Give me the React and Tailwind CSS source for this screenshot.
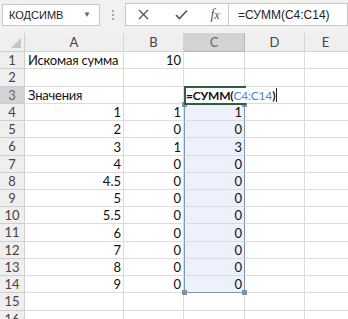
import React from "react";

const rowH = [17, 18, 17, 17, 17, 18, 17, 17, 17, 17, 18, 17, 17, 17, 18, 17];
const colA = ["Искомая сумма", "", "Значения", "1", "2", "3", "4", "4.5", "5", "5.5", "6", "7", "8", "9", "", ""];
const colB = ["10", "", "", "1", "0", "1", "0", "0", "0", "0", "0", "0", "0", "0", "", ""];
const colC = ["", "", "", "1", "0", "3", "0", "0", "0", "0", "0", "0", "0", "0", "", ""];

function Handle({ className }) {
  return <div className={"absolute w-[5px] h-[5px] bg-[#8090a8] " + className} />;
}

const cellFont = { fontFamily: 'Lato, "Liberation Sans", sans-serif' };

export default function App() {
  return (
    <div className="w-[348px] h-[319px] overflow-hidden bg-white" style={{ fontFamily: '"Liberation Sans", Arial, sans-serif' }}>
      {/* formula bar */}
      <div className="h-[33px] bg-[#f1f1f1] flex items-start pt-[4px]">
        <div className="ml-[2px] w-[98px] h-[22px] bg-white border border-[#c8c8c8] flex items-center justify-between pl-[6px] pr-[8px]">
          <span className="text-[11px] leading-none text-[#222]">КОДСИМВ</span>
          <span className="text-[8px] leading-none text-[#666]">▼</span>
        </div>
        <div className="w-[25px] h-[22px] flex flex-col items-center justify-center gap-[2px]">
          <span className="w-[2px] h-[2px] bg-[#a8a8a8]" />
          <span className="w-[2px] h-[2px] bg-[#a8a8a8]" />
          <span className="w-[2px] h-[2px] bg-[#a8a8a8]" />
        </div>
        <div className="w-[103px] h-[23px] -mt-[1px] bg-white border border-[#c8c8c8] border-r-0 flex items-center">
          <div className="w-[34px] flex justify-center">
            <svg width="11" height="11" viewBox="0 0 11 11">
              <path d="M1 1L10 10M10 1L1 10" stroke="#555" strokeWidth="1.3" />
            </svg>
          </div>
          <div className="w-[42px] flex justify-center">
            <svg width="13" height="11" viewBox="0 0 13 11">
              <path d="M1 6L4.5 9.5L12 1.5" stroke="#555" strokeWidth="1.6" fill="none" />
            </svg>
          </div>
          <div className="flex-1 flex justify-center">
            <span className="text-[14px] leading-none italic text-[#555]" style={{ fontFamily: '"Liberation Serif", serif' }}>
              f<span className="text-[12px]">x</span>
            </span>
          </div>
        </div>
        <div className="flex-1 h-[23px] -mt-[1px] bg-white border border-[#c8c8c8] flex items-center pl-[9px]">
          <span className="text-[12px] leading-none text-[#222]">=СУММ(C4:C14)</span>
        </div>
      </div>

      {/* grid */}
      <div className="relative" style={cellFont}>
        {/* header row */}
        <div className="flex h-[19px] text-[13px] leading-none text-[#444]">
          <div className="w-[25px] bg-[#efefef] border-r border-b border-[#cfcfcf] relative">
            <svg className="absolute right-[3px] bottom-[3px]" width="10" height="10" viewBox="0 0 10 10">
              <path d="M10 0L10 10L0 10Z" fill="#c4c4c4" />
            </svg>
          </div>
          <div className="w-[99px] bg-[#efefef] border-r border-b border-[#d4d4d4] flex items-center justify-center">A</div>
          <div className="w-[60px] bg-[#efefef] border-r border-b border-[#d4d4d4] flex items-center justify-center">B</div>
          <div className="w-[61px] bg-[#d3d3d3] border-r border-b border-[#b8b8b8] flex items-center justify-center text-[#666]">C</div>
          <div className="w-[60px] bg-[#efefef] border-r border-b border-[#d4d4d4] flex items-center justify-center">D</div>
          <div className="flex-1 bg-[#efefef] border-b border-[#d4d4d4] flex items-center justify-center">
            <span className="-ml-[2px]">E</span>
          </div>
        </div>

        {rowH.map((h, i) => {
          const r = i + 1;
          const inRange = r >= 4 && r <= 14;
          const sel = r === 3;
          return (
            <div key={r} className="flex text-[13px] leading-[15px] text-[#111]" style={{ height: h }}>
              <div className={"w-[25px] border-r border-b border-[#cfcfcf] flex items-center justify-center " + (sel ? "bg-[#d3d3d3] text-[#666]" : "bg-[#efefef] text-[#444]")}>
                {r}
              </div>
              <div className="w-[99px] border-r border-b border-[#dcdcdc] flex items-end overflow-visible whitespace-nowrap">
                {r <= 3 ? (
                  <span className="pl-[3px] tracking-[-0.2px]">{colA[i]}</span>
                ) : (
                  <span className="ml-auto pr-[2px]">{colA[i]}</span>
                )}
              </div>
              <div className="w-[60px] border-r border-b border-[#dcdcdc] flex items-end justify-end pr-[2px]">
                {colB[i]}
              </div>
              {sel ? (
                <div className="w-[61px] relative border-b border-[#dcdcdc] z-10">
                  <div className="absolute left-0 top-[-1px] w-[62px] h-[19px] border-[2px] border-[#2f5f3f]" />
                  <div className="absolute left-[2px] bottom-[0px] whitespace-nowrap flex items-end bg-white pr-[1px] text-[12px] tracking-[-0.2px]">
                    <span className="font-bold">=СУММ(</span>
                    <span className="text-[#5a83c8]">C4:C14</span>
                    <span className="font-bold">)</span>
                    <span className="w-[1px] h-[14px] bg-[#222] ml-[1px] mb-[1px]" />
                  </div>
                </div>
              ) : inRange ? (
                <div className="w-[61px] bg-[#edf1fb] border-b border-[#d6dbe6] border-l border-l-[#7f95b8] border-r border-r-[#7f95b8] flex items-end justify-end pr-[2px] relative">
                  {colC[i]}
                  {r === 14 && <div className="absolute left-[-1px] right-[-1px] bottom-[-1px] h-[1px] bg-[#7f95b8]" />}
                  {r === 4 && <div className="absolute left-[-1px] right-[-1px] top-0 h-[1px] bg-[#7f95b8]" />}
                  {r === 4 && <Handle className="left-[-3px] top-[-2px]" />}
                  {r === 4 && <Handle className="right-[-3px] top-[-2px]" />}
                  {r === 14 && <Handle className="left-[-3px] bottom-[-3px]" />}
                  {r === 14 && <Handle className="right-[-3px] bottom-[-3px]" />}
                </div>
              ) : (
                <div className="w-[61px] border-r border-b border-[#dcdcdc]" />
              )}
              <div className="w-[60px] border-r border-b border-[#dcdcdc]" />
              <div className="flex-1 border-b border-[#dcdcdc]" />
            </div>
          );
        })}
      </div>
    </div>
  );
}
